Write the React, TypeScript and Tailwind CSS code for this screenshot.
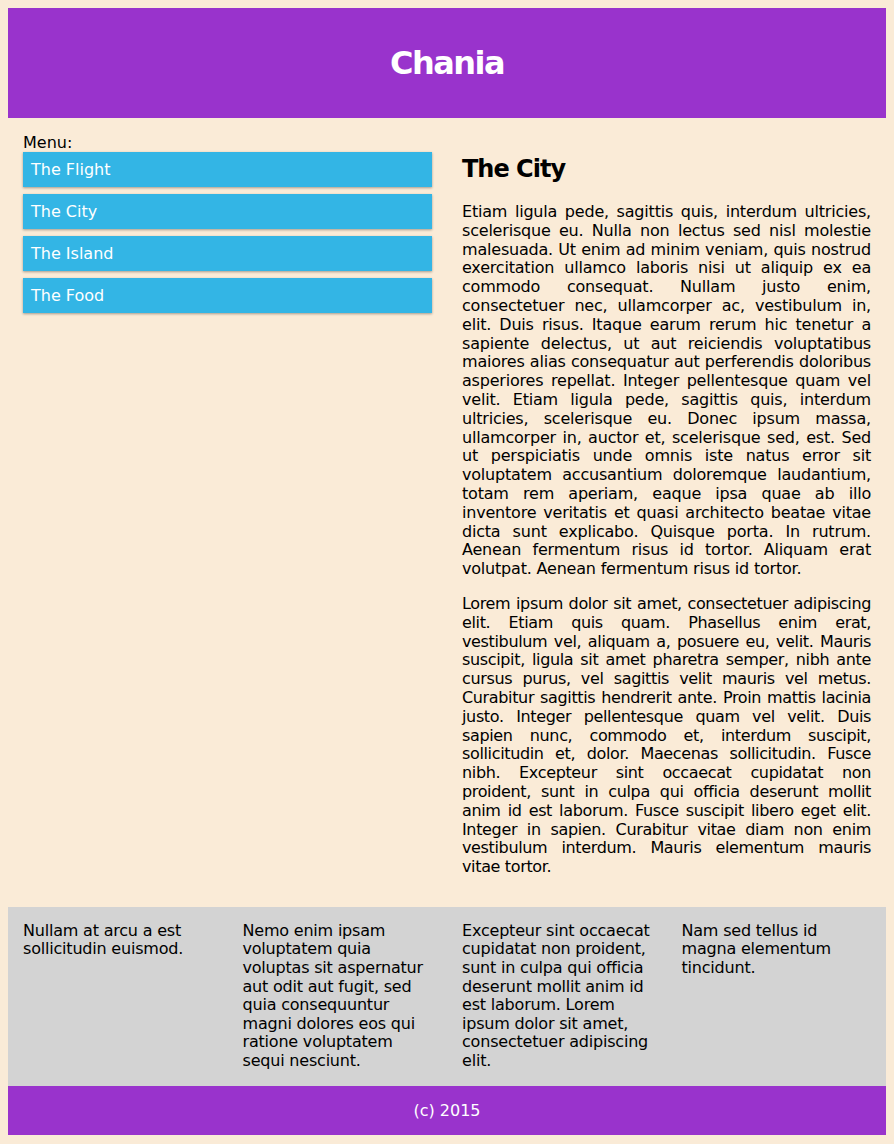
export default function App() {
  const menu = ["The Flight", "The City", "The Island", "The Food"];
  const aside = [
    "Nullam at arcu a est sollicitudin euismod.",
    "Nemo enim ipsam voluptatem quia voluptas sit aspernatur aut odit aut fugit, sed quia consequuntur magni dolores eos qui ratione voluptatem sequi nesciunt.",
    "Excepteur sint occaecat cupidatat non proident, sunt in culpa qui officia deserunt mollit anim id est laborum. Lorem ipsum dolor sit amet, consectetuer adipiscing elit.",
    "Nam sed tellus id magna elementum tincidunt.",
  ];

  return (
    <div className="min-h-screen bg-[#faebd7] p-2 text-black font-['DejaVu_Sans',sans-serif] text-[16px] leading-[18.8px]">
      {/* header */}
      <div className="bg-[#9933cc] p-[15px] text-white text-center">
        <h1 className="my-[21.5px] text-[32px] leading-[37px] font-bold tracking-[-1.5px]">Chania</h1>
      </div>

      <div className="flex">
        <div className="w-1/2 p-[15px]">
          <div className="leading-[19px]">Menu:</div>
          <ul>
            {menu.map((m) => (
              <li
                key={m}
                className="mb-[7px] bg-[#33b5e5] p-2 leading-[19px] text-white shadow-[0_1px_3px_rgba(0,0,0,0.12),0_1px_2px_rgba(0,0,0,0.24)]"
              >
                {m}
              </li>
            ))}
          </ul>
        </div>
        <div className="w-1/2 p-[15px] tracking-[-0.2px]">
          <h2 className="mt-[22px] mb-5 text-[24px] leading-[28px] font-bold tracking-[-1px]">The City</h2>
          <p className="text-justify">
            Etiam ligula pede, sagittis quis, interdum ultricies, scelerisque eu. Nulla non lectus sed nisl molestie
            malesuada. Ut enim ad minim veniam, quis nostrud exercitation ullamco laboris nisi ut aliquip ex ea commodo
            consequat. Nullam justo enim, consectetuer nec, ullamcorper ac, vestibulum in, elit. Duis risus. Itaque
            earum rerum hic tenetur a sapiente delectus, ut aut reiciendis voluptatibus maiores alias consequatur aut
            perferendis doloribus asperiores repellat. Integer pellentesque quam vel velit. Etiam ligula pede, sagittis
            quis, interdum ultricies, scelerisque eu. Donec ipsum massa, ullamcorper in, auctor et, scelerisque sed,
            est. Sed ut perspiciatis unde omnis iste natus error sit voluptatem accusantium doloremque laudantium, totam
            rem aperiam, eaque ipsa quae ab illo inventore veritatis et quasi architecto beatae vitae dicta sunt
            explicabo. Quisque porta. In rutrum. Aenean fermentum risus id tortor. Aliquam erat volutpat. Aenean
            fermentum risus id tortor.
          </p>
          <p className="mt-4 mb-[15px] text-justify tracking-[-0.35px]">
            Lorem ipsum dolor sit amet, consectetuer adipiscing elit. Etiam quis quam. Phasellus enim erat, vestibulum
            vel, aliquam a, posuere eu, velit. Mauris suscipit, ligula sit amet pharetra semper, nibh ante cursus
            purus, vel sagittis velit mauris vel metus. Curabitur sagittis hendrerit ante. Proin mattis lacinia justo.
            Integer pellentesque quam vel velit. Duis sapien nunc, commodo et, interdum suscipit, sollicitudin et,
            dolor. Maecenas sollicitudin. Fusce nibh. Excepteur sint occaecat cupidatat non proident, sunt in culpa qui
            officia deserunt mollit anim id est laborum. Fusce suscipit libero eget elit. Integer in sapien. Curabitur
            vitae diam non enim vestibulum interdum. Mauris elementum mauris vitae tortor.
          </p>
        </div>
      </div>

      {/* aside row */}
      <div className="flex bg-[#d3d3d3] leading-[18.6px] tracking-[-0.2px]">
        {aside.map((t, i) => (
          <div key={i} className="w-1/4 p-[15px]">
            {t}
          </div>
        ))}
      </div>

      {/* footer */}
      <div className="bg-[#9933cc] p-[15px] text-center leading-[19px] text-white">(c) 2015</div>
    </div>
  );
}
